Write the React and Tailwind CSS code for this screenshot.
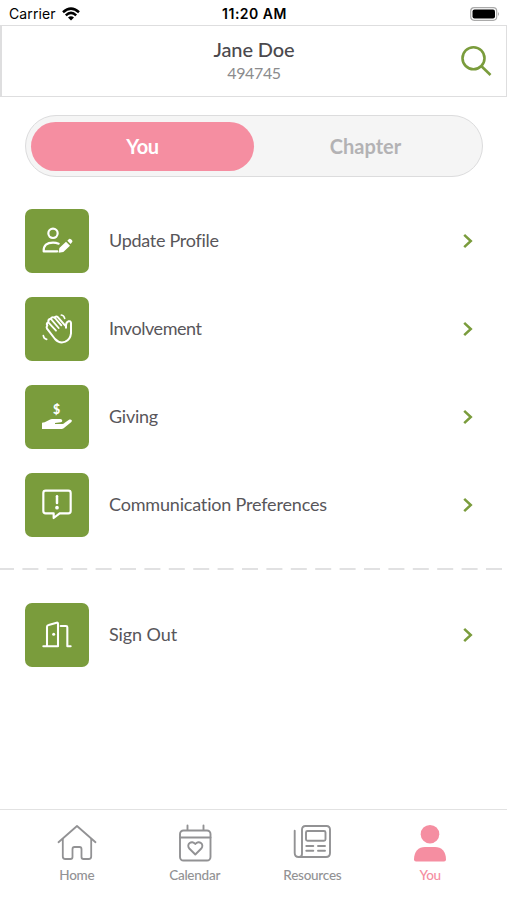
import { useState } from 'react';

function ProfileIcon() {
  return (
    <svg viewBox="0 0 192 192" className="w-16 h-16" fill="none" stroke="currentColor" strokeWidth="6.5">
      <circle cx="84" cy="73" r="14" />
      <path d="M97 127H56c-1-19 10-26 28-26 7 0 12 1 17 3" strokeLinejoin="round" strokeLinecap="round" />
      <path d="M101 131l2-14 20-19 12 12-20 19zM127 95l5-5q3-2 6 1l3 3q3 3 0 6l-4 5z" fill="currentColor" stroke="none" />
    </svg>
  );
}

function HandIcon() {
  return (
    <svg viewBox="0 0 192 192" className="w-16 h-16" fill="none" stroke="currentColor" strokeWidth="6" strokeLinecap="round" strokeLinejoin="round">
      <path d="M120 85L99 61q-6-5-10 1-8-4-12 3-8 1-7 10-7 4-3 11-4 4-1 9l24 31q14 15 31 8 15-7 17-25V78q-1-7-8-5-7 3-7 12v7" />
      <path d="M89 62l20 23M77 65l24 28M70 76l23 25" strokeWidth="5.5" />
      <path d="M109 54q8 1 10 10M55 116q1 9 10 11" strokeWidth="5" />
    </svg>
  );
}

function GivingIcon() {
  return (
    <svg viewBox="0 0 192 192" className="w-16 h-16" fill="currentColor">
      <text x="95" y="87" textAnchor="middle" fontSize="37" fontWeight="900" fontFamily="Lato, sans-serif">$</text>
      <path d="M51 113l8-1 15-8c2-1 4-2 7-2h25c7 0 8 9 1 10l-17 2v3h20c4 0 6-1 9-4l12-8c6-4 13 1 8 6l-22 18c-3 2-5 3-9 3H51z" />
    </svg>
  );
}

function MessageIcon() {
  return (
    <svg viewBox="0 0 192 192" className="w-16 h-16" fill="none" stroke="currentColor" strokeWidth="6.5" strokeLinejoin="round">
      <path d="M62 53h68q7 0 7 7v54q0 7-7 7h-26l-18 14v-14H62q-7 0-7-7V60q0-7 7-7z" />
      <path d="M96 70v20" strokeWidth="7.5" strokeLinecap="round" />
      <circle cx="96" cy="104" r="5.5" fill="currentColor" stroke="none" />
    </svg>
  );
}

function DoorIcon() {
  return (
    <svg viewBox="0 0 192 192" className="w-16 h-16" fill="none" stroke="currentColor" strokeWidth="6.2" strokeLinejoin="round" strokeLinecap="round">
      <path d="M55 130h44V62q0-4-4-3l-24 7q-5 1-5 5v59" />
      <path d="M107 69h16q4 0 4 4v57h10" />
      <circle cx="86" cy="94" r="4.5" fill="currentColor" stroke="none" />
    </svg>
  );
}

function HomeIcon() {
  return (
    <svg viewBox="0 0 40 40" className="w-10 h-10" fill="none" stroke="currentColor" strokeWidth="1.8" strokeLinecap="round" strokeLinejoin="round">
      <path d="M1.500 20.200L20 4l18.500 16.200" />
      <path d="M5.800 17v17.500q0 2.500 2.500 2.500h5.200q2 0 2-2v-8q0-2 2-2h5q2 0 2 2v8q0 2 2 2h5.200q2.500 0 2.500-2.500V17" />
    </svg>
  );
}

function CalendarIcon() {
  return (
    <svg viewBox="0 0 40 40" className="w-10 h-10" fill="none" stroke="currentColor" strokeWidth="1.9" strokeLinecap="round" strokeLinejoin="round">
      <rect x="5" y="8.500" width="30.500" height="30" rx="3.500" />
      <path d="M5 15.500h30.500M12.500 8V3.500M28.500 8V3.500" />
      <path d="M20.300 32.500l-6-6c-3.500-4 2.500-9 6-4.500 3.500-4.500 9.500.5 6 4.500z" />
    </svg>
  );
}

function ResourcesIcon() {
  return (
    <svg viewBox="0 0 40 40" className="w-10 h-10" fill="none" stroke="currentColor" strokeWidth="1.9" strokeLinecap="round" strokeLinejoin="round">
      <path d="M2.700 8.800v22.200q0 4 4 4h27.300q4 0 4-4V7.500q0-3.500-3.500-3.500h-21q-3.500 0-3.500 3.500V32q0 3-3 3" />
      <rect x="14" y="9" width="19.500" height="9.700" rx="1.500" />
      <path d="M14.300 24h7M26 24h7M14.300 28.700h7M26 28.700h7" />
    </svg>
  );
}

function UserIcon() {
  return (
    <svg viewBox="0 0 40 40" className="w-10 h-10" fill="currentColor">
      <circle cx="20" cy="12.200" r="9.300" />
      <path d="M4 37.500C4 29.500 8.500 25 15 25h10c6.500 0 11 4.500 11 12.500q0 2-2 2H6q-2 0-2-2z" />
    </svg>
  );
}

const menuItems = [
  { label: 'Update Profile', icon: <ProfileIcon />, spacing: 'tracking-[-0.29px]' },
  { label: 'Involvement', icon: <HandIcon />, spacing: 'tracking-[-0.45px]' },
  { label: 'Giving', icon: <GivingIcon />, spacing: 'tracking-[-0.25px]' },
  { label: 'Communication Preferences', icon: <MessageIcon />, spacing: 'tracking-[-0.18px]' },
];

const tabs = [
  { label: 'Home', icon: <HomeIcon /> },
  { label: 'Calendar', icon: <CalendarIcon /> },
  { label: 'Resources', icon: <ResourcesIcon /> },
  { label: 'You', icon: <UserIcon /> },
];

function MenuRow({ label, icon, spacing }) {
  return (
    <button className="flex items-center w-full h-16 pl-[25px] pr-[34px] text-left">
      <span className="flex items-center justify-center w-16 h-16 rounded-[7px] bg-[#7a9c3c] text-white">{icon}</span>
      <span className={`flex-1 ml-5 pb-[2px] text-[18px] text-[#58565a] ${spacing}`}>{label}</span>
      <svg viewBox="0 0 10 16" className="w-2.5 h-4" fill="none" stroke="#7a9c3c" strokeWidth="2.500">
        <path d="M1.200 1.800L7.800 8l-6.600 6.200" />
      </svg>
    </button>
  );
}

function StatusBar() {
  return (
    <div className="grid grid-cols-3 items-center h-[25px] pt-[2px] pl-[9px] pr-[7px] font-['Inter',sans-serif] text-black">
      <div className="flex items-center gap-[6px] text-[14px] tracking-[0.1px]">
        Carrier
        <svg viewBox="0 0 18 14" className="w-[18px] h-[14px]" fill="none" stroke="currentColor" strokeWidth="2.500">
          <path d="M1 5.200Q9-2 17 5.200M3.800 8.300q5.200-4.800 10.400 0" />
          <path d="M6 10.400q3-2.500 6 0L9 13.500z" fill="currentColor" stroke="none" />
        </svg>
      </div>
      <div className="text-center text-[14px] font-semibold whitespace-nowrap tracking-[0.5px]">11:20 AM</div>
      <svg viewBox="0 0 30 14" className="w-[30px] h-[14px] justify-self-end">
        <rect x=".7" y=".7" width="26" height="12.600" rx="3.500" fill="white" stroke="#aaa" strokeWidth="1.200" />
        <rect x="2.500" y="2.500" width="22.500" height="9" rx="2" fill="black" />
        <path d="M28 5q2 2 0 4z" fill="#aaa" />
      </svg>
    </div>
  );
}

export default function App() {
  const [view, setView] = useState('You');

  return (
    <div className="flex flex-col w-full h-screen overflow-hidden bg-white font-['Lato',sans-serif]">
      <StatusBar />

      <header className="flex items-center h-[72px] border border-l-2 border-[#dededf] pr-[14px] pl-[46px]">
        <div className="flex-1 text-center">
          <div className="text-[20px] leading-6 font-medium text-[#4b494d] -tracking-[0.1px]">Jane Doe</div>
          <div className="text-[16px] leading-6 text-[#8b8b8d] -tracking-[0.4px]">494745</div>
        </div>
        <svg viewBox="0 0 32 32" className="w-8 h-8" fill="none" stroke="#7a9c3c" strokeWidth="2.600">
          <circle cx="13.500" cy="13.200" r="11" />
          <path d="M21.500 21.200l9 8.800" />
        </svg>
      </header>

      {/* You / Chapter switch */}
      <div className="flex items-center shrink-0 mt-[18px] mx-[25px] h-[62px] w-[458px] p-[5px] rounded-full border border-[#dcdcdd] bg-[#f5f5f5] text-[20px] font-bold">
        {['You', 'Chapter'].map((name) => (
          <button
            key={name}
            onClick={() => setView(name)}
            className={`flex-1 h-[49px] rounded-full ${view === name ? 'bg-[#f58ea1] text-white -tracking-[0.4px]' : 'text-[#b3b2b4]'}`}
          >
            {name}
          </button>
        ))}
      </div>

      <main className="flex-1 flex flex-col min-h-0">
        <div className="flex flex-col gap-6 mt-8">
          {menuItems.map((item) => (
            <MenuRow key={item.label} {...item} />
          ))}
        </div>
        <svg className="w-full h-[2px] mt-[31px] mb-[33px] shrink-0" stroke="#e1e1e2" strokeWidth="2">
          <line x1="-2" y1="1" x2="510" y2="1" strokeDasharray="16 8.400" />
        </svg>
        <MenuRow label="Sign Out" icon={<DoorIcon />} spacing="tracking-[-0.1px]" />
      </main>

      {/* Bottom tabs */}
      <nav className="flex h-[91px] border-t border-[#e2e2e2] px-[18px] pt-[12px]">
        {tabs.map((tab) => (
          <button
            key={tab.label}
            className={`flex-1 flex flex-col items-center text-[13.5px] leading-[18px] font-medium -tracking-[0.25px] ${tab.label === 'You' ? 'text-[#f58ea1]' : 'text-[#929294]'}`}
          >
            {tab.icon}
            <span className="mt-1">{tab.label}</span>
          </button>
        ))}
      </nav>
    </div>
  );
}
